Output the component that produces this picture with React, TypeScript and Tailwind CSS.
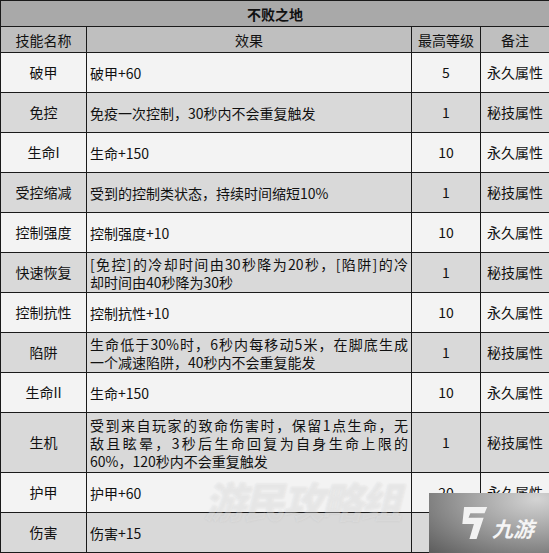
import React from 'react';

type Row = {
  name: string;
  lines: string[];
  level: string;
  note: string;
  justify?: boolean;
  tall?: boolean;
};

const rows: Row[] = [
  { name: '破甲', lines: ['破甲+60'], level: '5', note: '永久属性' },
  { name: '免控', lines: ['免疫一次控制，30秒内不会重复触发'], level: '1', note: '秘技属性' },
  { name: '生命I', lines: ['生命+150'], level: '10', note: '永久属性' },
  { name: '受控缩减', lines: ['受到的控制类状态，持续时间缩短10%'], level: '1', note: '秘技属性' },
  { name: '控制强度', lines: ['控制强度+10'], level: '10', note: '永久属性' },
  { name: '快速恢复', lines: ['[免控]的冷却时间由30秒降为20秒，[陷阱]的冷', '却时间由40秒降为30秒'], level: '1', note: '秘技属性', justify: true },
  { name: '控制抗性', lines: ['控制抗性+10'], level: '10', note: '永久属性' },
  { name: '陷阱', lines: ['生命低于30%时，6秒内每移动5米，在脚底生成', '一个减速陷阱，40秒内不会重复能发'], level: '1', note: '秘技属性', justify: true },
  { name: '生命II', lines: ['生命+150'], level: '10', note: '永久属性' },
  { name: '生机', lines: ['受到来自玩家的致命伤害时，保留1点生命，无', '敌且眩晕，3秒后生命回复为自身生命上限的', '60%，120秒内不会重复触发'], level: '1', note: '秘技属性', justify: true, tall: true },
  { name: '护甲', lines: ['护甲+60'], level: '20', note: '永久属性' },
  { name: '伤害', lines: ['伤害+15'], level: '20', note: '永久属性' },
];

const cell = 'border border-[#1a1a1a] p-0 align-middle';

export default function App() {
  return (
    <div
      className="relative w-[549px] h-[553px] overflow-hidden bg-white text-[14px] text-[#111]"
      style={{ fontFamily: '"Noto Sans CJK SC", "Noto Sans", sans-serif' }}
    >
      <table className="w-[549px] table-fixed border-collapse">
        <colgroup>
          <col className="w-[86px]" />
          <col className="w-[325px]" />
          <col className="w-[69px]" />
          <col className="w-[69px]" />
        </colgroup>
        <tbody>
          <tr className="h-[26px] bg-[#a9a9a9]">
            <td colSpan={4} className={`${cell} text-center font-bold leading-none`}>不败之地</td>
          </tr>
          <tr className="h-[26px] bg-[#bfbfbf]">
            <td className={`${cell} text-center leading-none`}>技能名称</td>
            <td className={`${cell} text-center leading-none`}>效果</td>
            <td className={`${cell} text-center leading-none`}>最高等级</td>
            <td className={`${cell} text-center leading-none`}>备注</td>
          </tr>
          {rows.map((r, i) => (
            <tr key={r.name} className={`${r.tall ? 'h-[60px]' : 'h-[40px]'} ${i % 2 === 0 ? 'bg-[#f3f3f3]' : 'bg-[#d9d9d9]'}`}>
              <td className={`${cell} text-center`}>{r.name}</td>
              <td className={`${cell} px-[3px] leading-[18px]`}>
                {r.lines.map((l, j) => (
                  <div
                    key={j}
                    className={r.justify && j < r.lines.length - 1 ? 'text-justify [text-align-last:justify] whitespace-nowrap' : 'whitespace-nowrap'}
                  >
                    {l}
                  </div>
                ))}
              </td>
              <td className={`${cell} text-center`}>{r.level}</td>
              <td className={`${cell} text-center`}>{r.note}</td>
            </tr>
          ))}
        </tbody>
      </table>

      {/* watermark */}
      <div className="pointer-events-none absolute left-[204px] top-[468px] text-[42px] font-black italic tracking-[-3px] text-white/25 [text-shadow:0_0_2px_rgba(140,140,140,0.2)] select-none">
        游民攻略组
      </div>

      {/* 九游 logo */}
      <div className="absolute left-[429px] top-[493px] w-[120px] h-[60px] flex items-center gap-[3px] pl-[28px] bg-[radial-gradient(ellipse_at_90%_10%,#d4d4d4_0%,#a0a0a0_45%,#5c5c5c_100%)]">
        <svg width="32" height="38" viewBox="0 0 36 40">
          <path d="M8 2 H34 L31 9 H15 L13 14 H30 L22 38 H14 L19 21 H6 Z" fill="#f2f2f2" />
        </svg>
        <span className="text-[21px] italic font-bold text-[#f5f5f5] leading-none mt-[10px]">九游</span>
      </div>
    </div>
  );
}
